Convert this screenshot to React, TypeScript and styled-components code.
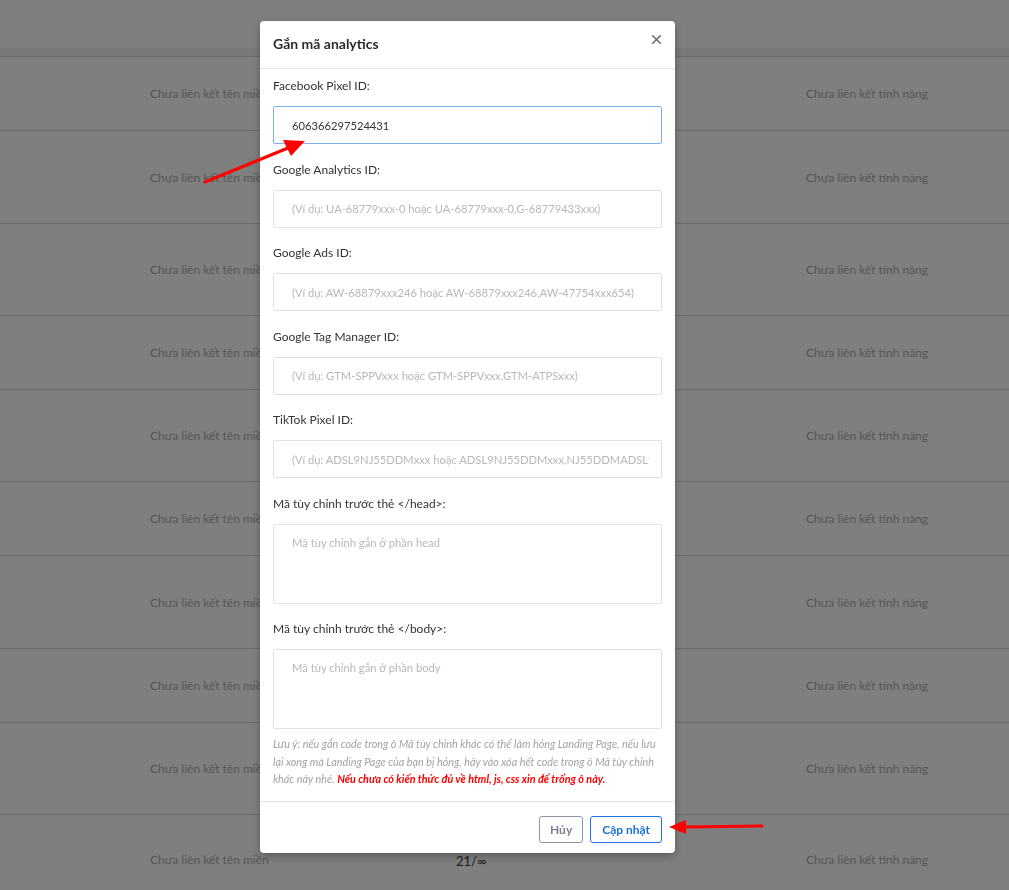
import React from 'react'
import styled, { createGlobalStyle } from 'styled-components'
import { X } from 'lucide-react'

const GlobalStyle = createGlobalStyle`
    html, body {
        margin:0;
        padding:0;
        height:890px;
        overflow:hidden;
        background:#fff;
        font-family: Lato, "Open Sans", "Noto Sans", sans-serif;
    }
    * { box-sizing:border-box; }
`

const rows = [74, 93, 92, 74, 92, 74, 93, 74, 92, 90]

const fields = [
    { label: 'Facebook Pixel ID:', value: '606366297524431', placeholder: '' },
    { label: 'Google Analytics ID:', value: '', placeholder: '(Ví dụ: UA-68779xxx-0 hoặc UA-68779xxx-0,G-68779433xxx)' },
    { label: 'Google Ads ID:', value: '', placeholder: '(Ví dụ: AW-68879xxx246 hoặc AW-68879xxx246,AW-47754xxx654)' },
    { label: 'Google Tag Manager ID:', value: '', placeholder: '(Ví dụ: GTM-SPPVxxx hoặc GTM-SPPVxxx,GTM-ATPSxxx)' },
    { label: 'TikTok Pixel ID:', value: '', placeholder: '(Ví dụ: ADSL9NJ55DDMxxx hoặc ADSL9NJ55DDMxxx,NJ55DDMADSL9NJ55DDMxxx)' },
]

const Table = () => {
    return (
        <Page>
            <TopBar />
            <HeadBand />
            {rows.map((h, i) => (
                <Row key={i} $h={h}>
                    <span />
                    <Cell>Chưa liên kết tên miền</Cell>
                    <Count>{i === rows.length - 1 ? '21/∞' : ''}</Count>
                    <Cell>Chưa liên kết tính năng</Cell>
                </Row>
            ))}
        </Page>
    )
}

const AnalyticsModal = () => {
    return (
        <Modal>
            <Header>
                <Title>Gắn mã analytics</Title>
                <Close><X size={15} strokeWidth={2.6} /></Close>
            </Header>
            <Body>
                {fields.map((f, i) => (
                    <Group key={f.label}>
                        <Label>{f.label}</Label>
                        <Input
                            $active={i === 0}
                            autoFocus={i === 0}
                            defaultValue={f.value}
                            placeholder={f.placeholder}
                        />
                    </Group>
                ))}
                <Group>
                    <Label>Mã tùy chỉnh trước thẻ &lt;/head&gt;:</Label>
                    <Area placeholder="Mã tùy chỉnh gắn ở phần head" />
                </Group>
                <Group>
                    <Label>Mã tùy chỉnh trước thẻ &lt;/body&gt;:</Label>
                    <Area placeholder="Mã tùy chỉnh gắn ở phần body" />
                </Group>
                <Note>
                    Lưu ý: nếu gắn code trong ô Mã tùy chỉnh khác có thể làm hỏng Landing Page, nếu lưu lại xong mà Landing Page của bạn bị hỏng, hãy vào xóa hết code trong ô Mã tùy chỉnh khác này nhé.{' '}
                    <Warn>Nếu chưa có kiến thức đủ về html, js, css xin để trống ô này.</Warn>
                </Note>
            </Body>
            <Footer>
                <Button>Hủy</Button>
                <Button $primary>Cập nhật</Button>
            </Footer>
        </Modal>
    )
}

const Arrows = () => {
    return (
        <Marks width="1009" height="890" viewBox="0 0 1009 890">
            <line x1="205" y1="182" x2="288" y2="148" stroke="#ff0000" strokeWidth="3" strokeLinecap="round" />
            <polygon points="305,141 283,140 291,156" fill="#ff0000" />
            <line x1="762" y1="826" x2="684" y2="827" stroke="#ff0000" strokeWidth="3" strokeLinecap="round" />
            <polygon points="669,827 686,820 686,834" fill="#ff0000" />
        </Marks>
    )
}

const App = () => {
    return (
        <>
            <GlobalStyle />
            <Table />
            <Overlay>
                <AnalyticsModal />
            </Overlay>
            <Arrows />
        </>
    )
}

export default App

const Page = styled.div`
    width:1009px;
    background:#fff;
`

const TopBar = styled.div`
    height:48px;
    background:#fff;
`

const HeadBand = styled.div`
    height:9px;
    background:#f3f3f3;
    border-bottom:1px solid #d6d6d6;
`

const Row = styled.div<{ $h: number }>`
    display:grid;
    grid-template-columns: 150px 306px 350px 1fr;
    align-items:center;
    height:${p => p.$h}px;
    border-bottom:1px solid #d6d6d6;
    font-size:12px;
`

const Cell = styled.span`
    color:#acacac;
    white-space:nowrap;
`

const Count = styled.span`
    color:#3a3a3a;
    font-size:13px;
    padding-top:2px;
`

const Overlay = styled.div`
    position:fixed;
    inset:0;
    background:rgba(0,0,0,0.5);
    padding:21px 0 0 260px;
`

const Modal = styled.div`
    width:415px;
    background:#fff;
    border-radius:4px;
    box-shadow:0 3px 9px rgba(0,0,0,0.3);
    color:#333;
`

const Header = styled.div`
    display:flex;
    justify-content:space-between;
    align-items:center;
    height:48px;
    padding:0 11px 4px 13px;
    border-bottom:1px solid #e3e3e3;
`

const Title = styled.span`
    font-size:14px;
    font-weight:700;
    color:#2b2b2b;
    padding-top:2px;
`

const Close = styled.span`
    display:flex;
    color:#6a6a6a;
    margin-top:-6px;
`

const Body = styled.div`
    display:flex;
    flex-direction:column;
    padding:8px 13px 13px 13px;
`

const Group = styled.div`
    display:flex;
    flex-direction:column;
    margin-bottom:16.5px;
    &:nth-last-child(2) { margin-bottom:6px; }
`

const Label = styled.label`
    font-size:12px;
    line-height:18px;
    color:#333;
    margin-bottom:11px;
`

const Input = styled.input<{ $active?: boolean }>`
    height:38px;
    width:389px;
    padding:0 12px 0 18px;
    border:1px solid ${p => (p.$active ? '#7fb0ee' : '#e2e2e2')};
    border-radius:2px;
    font:inherit;
    font-size:11.2px;
    color:#333;
    outline:none;
    &::placeholder { color:#b8b8b8; }
`

const Area = styled.textarea`
    height:80px;
    width:389px;
    padding:11px 12px 0 18px;
    border:1px solid #e2e2e2;
    border-radius:2px;
    font:inherit;
    font-size:11.2px;
    resize:none;
    outline:none;
    &::placeholder { color:#b8b8b8; }
`

const Note = styled.p`
    margin:0;
    font-size:10.8px;
    line-height:17.5px;
    font-style:italic;
    color:#a3a3a3;
`

const Warn = styled.span`
    color:#ff0000;
    font-weight:700;
`

const Footer = styled.div`
    display:flex;
    justify-content:flex-end;
    gap:7px;
    height:52px;
    padding:14px 13px 0 0;
    border-top:1px solid #e3e3e3;
`

const Button = styled.button<{ $primary?: boolean }>`
    height:27px;
    padding:0 ${p => (p.$primary ? 11 : 10)}px;
    background:#fff;
    border:1px solid ${p => (p.$primary ? '#1a73e8' : '#8f93a8')};
    border-radius:3px;
    font:inherit;
    font-size:12px;
    font-weight:700;
    color:${p => (p.$primary ? '#1a6fe0' : '#7b7f93')};
`

const Marks = styled.svg`
    position:fixed;
    left:0;
    top:0;
    pointer-events:none;
`
